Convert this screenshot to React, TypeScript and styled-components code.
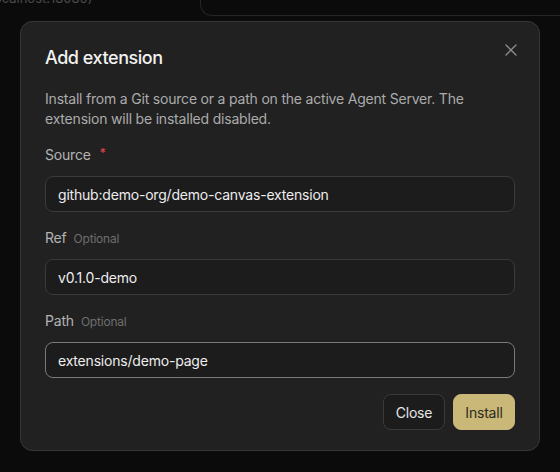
import React from "react";
import styled, { createGlobalStyle } from "styled-components";

const Global = createGlobalStyle`
  html, body { margin: 0; padding: 0; background: #0b0b0b; }
  body { font-family: Inter, "Noto Sans", sans-serif; -webkit-font-smoothing: antialiased; }
  * { box-sizing: border-box; }
`;

const Page = styled.div`
  position: relative;
  width: 560px;
  height: 472px;
  overflow: hidden;
  background: #0b0b0b;
`;

const Backdrop = styled.div`
  display: flex;
  align-items: flex-start;
  height: 16px;
`;

const BgText = styled.div`
  width: 200px;
  margin-top: -10px;
  font-size: 13px;
  line-height: 16px;
  color: #4a4a4a;
  white-space: nowrap;
  text-indent: -14px;
`;

const BgPanel = styled.div`
  flex: 1;
  height: 16px;
  border: 1px solid #262626;
  border-top: none;
  border-right: none;
  border-bottom-left-radius: 12px;
  background: #0b0b0b;
`;

const Overlay = styled.div`
  position: absolute;
  inset: 0;
  display: flex;
  justify-content: center;
  padding-top: 21px;
`;

const Dialog = styled.div`
  position: relative;
  width: 520px;
  height: 430px;
  background: #212121;
  border: 1px solid #363636;
  border-radius: 12px;
  padding: 22px 24px 23px 24px;
  display: flex;
  flex-direction: column;
  letter-spacing: -0.2px;
`;

const CloseIcon = styled.button`
  position: absolute;
  top: 19px;
  right: 19px;
  width: 18px;
  height: 18px;
  padding: 0;
  border: none;
  background: transparent;
  color: #8a8a8a;
  display: flex;
  align-items: center;
  justify-content: center;
`;

const Title = styled.h2`
  margin: 0;
  font-size: 18px;
  line-height: 28px;
  font-weight: 500;
  letter-spacing: -0.45px;
  color: #f2f2f2;
`;

const Description = styled.p`
  margin: 17px 0 0 0;
  font-size: 14px;
  line-height: 20px;
  color: #ababab;
`;

const Form = styled.div`
  margin-top: 16px;
  display: flex;
  flex-direction: column;
  gap: 16px;
`;

const Field = styled.div`
  display: flex;
  flex-direction: column;
  gap: 10px;
`;

const Label = styled.div`
  display: flex;
  align-items: baseline;
  gap: 7px;
  font-size: 14px;
  line-height: 20px;
  color: #b4b4b4;
`;

const Required = styled.span`
  color: #e5484d;
  font-size: 12px;
  margin-left: 2px;
  position: relative;
  top: -3px;
`;

const Hint = styled.span`
  font-size: 12px;
  color: #6e6e6e;
`;

const Input = styled.input<{ $focused?: boolean }>`
  width: 470px;
  height: 36px;
  border-radius: 8px;
  border: 1px solid ${(p) => (p.$focused ? "#7a7a7a" : "#3a3a3a")};
  background: #1c1c1c;
  color: #ededed;
  font-family: inherit;
  font-size: 14px;
  letter-spacing: -0.2px;
  padding: 0 12px;
  outline: none;
`;

const Actions = styled.div`
  margin-top: 16px;
  display: flex;
  justify-content: flex-end;
  gap: 8px;
`;

const Button = styled.button<{ $primary?: boolean }>`
  height: 36px;
  width: 62px;
  padding: 0;
  border-radius: 8px;
  font-family: inherit;
  font-size: 14px;
  letter-spacing: -0.2px;
  border: 1px solid ${(p) => (p.$primary ? "#c9b877" : "#3a3a3a")};
  background: ${(p) => (p.$primary ? "#c9b877" : "#1c1c1c")};
  color: ${(p) => (p.$primary ? "#2d2a22" : "#e6e6e6")};
`;

export default function App() {
  return (
    <Page>
      <Global />
      <Backdrop>
        <BgText>(localhost:18080)</BgText>
        <BgPanel />
      </Backdrop>
      <Overlay>
        <Dialog>
          <CloseIcon aria-label="Close">
            <svg width="12" height="12" viewBox="0 0 12 12" fill="none">
              <path d="M1 1L11 11M11 1L1 11" stroke="currentColor" strokeWidth="1.4" strokeLinecap="round" />
            </svg>
          </CloseIcon>
          <Title>Add extension</Title>
          <Description>
            Install from a Git source or a path on the active Agent Server. The extension will be installed disabled.
          </Description>
          <Form>
            <Field>
              <Label>
                Source<Required>*</Required>
              </Label>
              <Input readOnly value="github:demo-org/demo-canvas-extension" />
            </Field>
            <Field>
              <Label>
                Ref<Hint>Optional</Hint>
              </Label>
              <Input readOnly value="v0.1.0-demo" />
            </Field>
            <Field>
              <Label>
                Path<Hint>Optional</Hint>
              </Label>
              <Input readOnly $focused value="extensions/demo-page" />
            </Field>
          </Form>
          <Actions>
            <Button>Close</Button>
            <Button $primary>Install</Button>
          </Actions>
        </Dialog>
      </Overlay>
    </Page>
  );
}
